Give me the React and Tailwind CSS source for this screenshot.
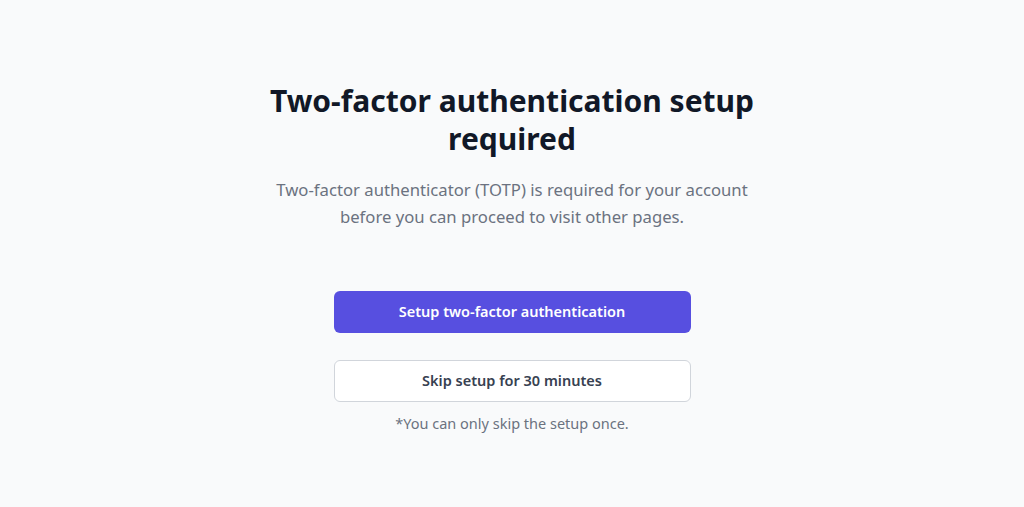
import React from "react";

export default function App() {
  return (
    <div
      className="min-h-screen bg-[#f9fafb] flex flex-col items-center pt-[82px]"
      style={{ fontFamily: '"Noto Sans", "Open Sans", sans-serif' }}
    >
      <div className="w-[512px] text-center">
        <h1 className="text-[30px] leading-[38px] font-bold text-[#111827]">
          Two-factor authentication setup required
        </h1>
        <p className="mt-[18px] text-[16.7px] leading-[27px] text-[#6b7280]">
          Two-factor authenticator (TOTP) is required for your account before you can
          proceed to visit other pages.
        </p>
      </div>
      <div className="w-[357px] mt-[61px] flex flex-col">
        <button className="h-[42px] w-full rounded-md bg-[#574fe0] text-white text-[14.5px] font-semibold">
          Setup two-factor authentication
        </button>
        <button className="mt-[27px] h-[42px] w-full rounded-md bg-white border border-[#d1d5db] text-[#374151] text-[14.5px] font-semibold">
          Skip setup for 30 minutes
        </button>
        <p className="mt-[11px] text-center text-[14.5px] text-[#6b7280]">
          *You can only skip the setup once.
        </p>
      </div>
    </div>
  );
}
